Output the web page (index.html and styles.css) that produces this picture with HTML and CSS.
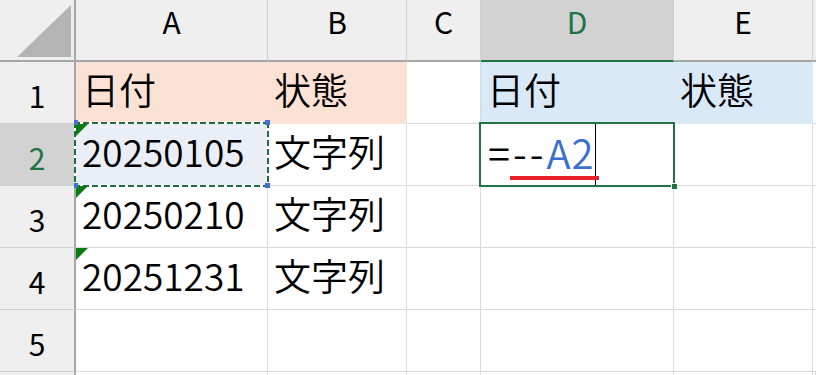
FILE: index.html
```html
<!DOCTYPE html>
<html lang="ja">
<head>
<meta charset="utf-8">
<title>Sheet</title>
<link rel="stylesheet" href="styles.css">
</head>
<body>
<div class="sheet">
  <div class="corner">
    <svg class="corner-tri" width="74" height="60" viewBox="0 0 74 60"><polygon points="17,57 71,57 71,5" fill="#b4b4b4"/></svg>
  </div>
  <div class="ch">A</div>
  <div class="ch">B</div>
  <div class="ch">C</div>
  <div class="ch ch-sel">D</div>
  <div class="ch">E</div>
  <div class="ch ch-last"></div>

  <div class="rh">1</div>
  <div class="c peach">日付</div>
  <div class="c peach">状態</div>
  <div class="c"></div>
  <div class="c blue">日付</div>
  <div class="c blue">状態</div>
  <div class="c"></div>

  <div class="rh rh-sel">2</div>
  <div class="c copy"><span class="err"></span><span class="marquee"></span><span class="hd hd-tl"></span><span class="hd hd-tr"></span><span class="hd hd-bl"></span><span class="hd hd-br"></span>20250105</div>
  <div class="c">文字列</div>
  <div class="c"></div>
  <div class="c edit"><span class="formula">=--<span class="ref">A2</span></span><span class="caret"></span><span class="active"></span><span class="fill-handle"></span><span class="underline"></span></div>
  <div class="c"></div>
  <div class="c"></div>

  <div class="rh">3</div>
  <div class="c"><span class="err"></span>20250210</div>
  <div class="c">文字列</div>
  <div class="c"></div>
  <div class="c"></div>
  <div class="c"></div>
  <div class="c"></div>

  <div class="rh">4</div>
  <div class="c"><span class="err"></span>20251231</div>
  <div class="c">文字列</div>
  <div class="c"></div>
  <div class="c"></div>
  <div class="c"></div>
  <div class="c"></div>

  <div class="rh">5</div>
  <div class="c"></div>
  <div class="c"></div>
  <div class="c"></div>
  <div class="c"></div>
  <div class="c"></div>
  <div class="c"></div>

  <div class="rh rh-stub"></div>
  <div class="c c-stub"></div>
  <div class="c c-stub"></div>
  <div class="c c-stub"></div>
  <div class="c c-stub"></div>
  <div class="c c-stub"></div>
  <div class="c c-stub"></div>
</div>
</body>
</html>
```

FILE: styles.css
```css
* { box-sizing: border-box; }
html, body { margin: 0; padding: 0; background: #ffffff; }
body { width: 816px; height: 375px; overflow: hidden; font-family: "Noto Sans CJK JP", "Noto Sans", sans-serif; font-weight: 350; color: #000; }

.sheet {
  display: grid;
  grid-template-columns: 76px 192px 139px 74px 193px 139px 3px;
  grid-template-rows: 62px 62px 62px 62px 62px 62px 3px;
  width: 816px;
  height: 375px;
  overflow: hidden;
}

.corner {
  background: #efefef;
  border-right: 2px solid #a6a6a6;
  border-bottom: 2px solid #a6a6a6;
}
.corner-tri { display: block; }

.ch {
  background: #efefef;
  border-right: 1px solid #cfcfcf;
  border-bottom: 2px solid #a6a6a6;
  text-align: center;
  font-size: 30px;
  font-weight: 400;
  line-height: 42px;
  overflow: hidden;
}
.ch-sel { background: #d2d2d2; color: #217346; border-bottom-color: #217346; }
.ch-last { border-right: 0; }

.rh {
  background: #efefef;
  border-right: 2px solid #a6a6a6;
  border-bottom: 1px solid #cfcfcf;
  text-align: center;
  font-size: 30px;
  font-weight: 400;
  line-height: 66px;
}
.rh-sel { background: #d2d2d2; color: #217346; border-right-color: #217346; }
.rh-stub { border-bottom: 0; }

.c {
  position: relative;
  border-right: 1px solid #dadada;
  border-bottom: 1px solid #dadada;
  display: flex;
  align-items: center;
  padding: 0 0 6px 6px;
  font-size: 37px;
  line-height: 1;
  white-space: nowrap;
}
.c-stub { border-bottom: 0; padding: 0; }
.peach { background: #fbe2d5; border-color: #fbe2d5; }
.blue { background: #dae9f8; border-color: #dae9f8; }

.copy { background: #e9eef7; }

.err {
  position: absolute;
  left: 0;
  top: 0;
  width: 0;
  height: 0;
  border-top: 12px solid #0a7d12;
  border-right: 12px solid transparent;
  z-index: 3;
}

.marquee {
  position: absolute;
  left: -2px;
  top: -2px;
  right: -2px;
  bottom: -2px;
  background:
    repeating-linear-gradient(90deg, #226b41 0 6px, #ffffff 6px 9px) left top / 100% 2px no-repeat,
    repeating-linear-gradient(90deg, #226b41 0 6px, #ffffff 6px 9px) left bottom / 100% 2px no-repeat,
    repeating-linear-gradient(180deg, #226b41 0 6px, #ffffff 6px 9px) left top / 2px 100% no-repeat,
    repeating-linear-gradient(180deg, #226b41 0 6px, #ffffff 6px 9px) right top / 2px 100% no-repeat;
  z-index: 2;
}
.hd {
  position: absolute;
  width: 5px;
  height: 5px;
  background: #3f6fcf;
  z-index: 4;
}
.hd-tl { left: -2px; top: -4px; width: 4px; }
.hd-tr { right: -3px; top: -4px; }
.hd-bl { left: -2px; bottom: -3px; width: 4px; }
.hd-br { right: -3px; bottom: -3px; }

.edit { padding-left: 7px; padding-bottom: 0; align-items: stretch; }
.formula { display: flex; align-items: center; padding-bottom: 6px; font-size: 40px; letter-spacing: 3px; }
.ref { color: #3b6fcd; letter-spacing: 1px; }
.caret { width: 1px; background: #000; margin: -2px 0 -2px 1px; }
.active {
  position: absolute;
  left: -2px;
  top: -2px;
  right: -2px;
  bottom: -2px;
  border: 2px solid #217346;
  z-index: 2;
}
.fill-handle {
  position: absolute;
  right: -5px;
  bottom: -5px;
  width: 7px;
  height: 7px;
  background: #217346;
  border: 1px solid #ffffff;
  z-index: 3;
}
.underline {
  position: absolute;
  left: 29px;
  top: 52px;
  width: 89px;
  height: 4px;
  background: #e8202a;
  z-index: 3;
}
```
